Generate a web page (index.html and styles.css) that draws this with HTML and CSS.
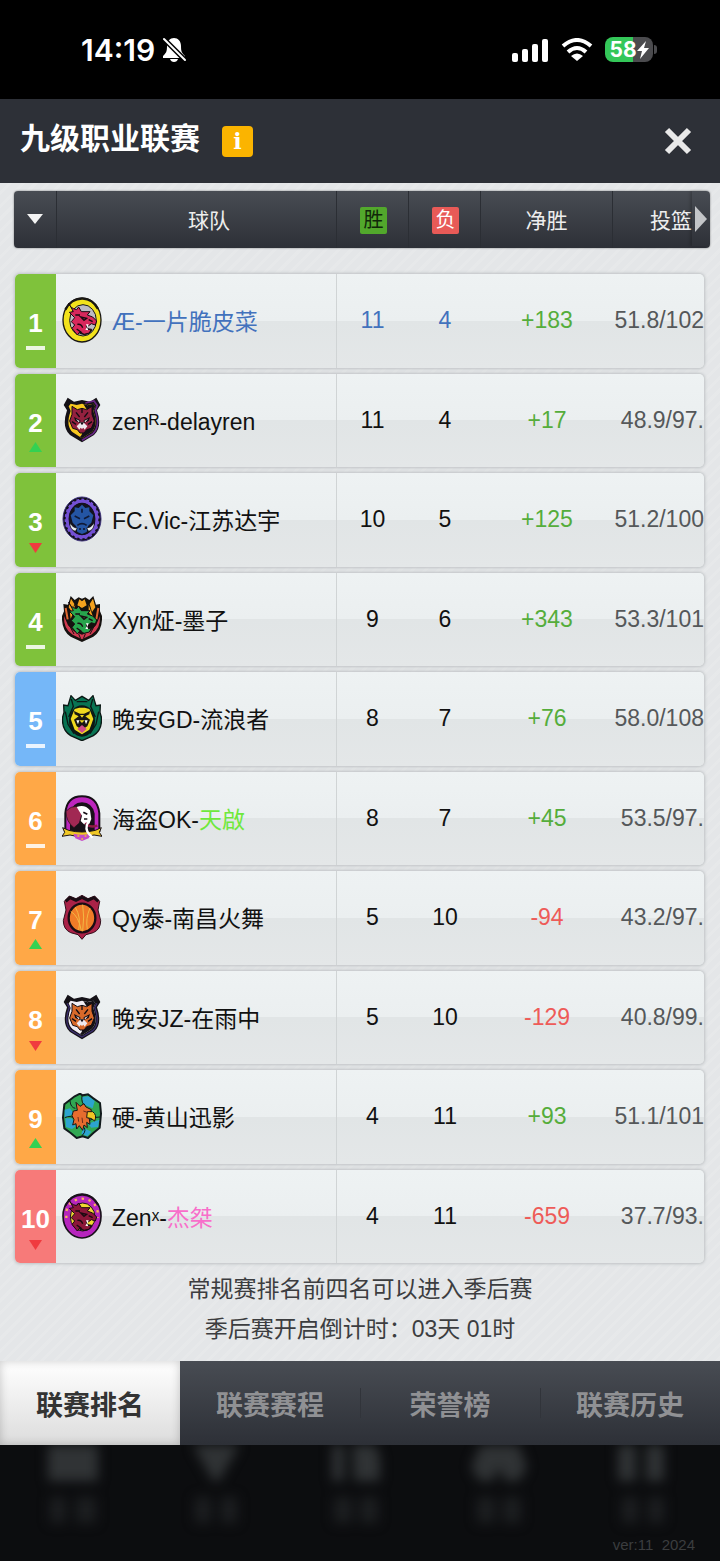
FILE: index.html
```html
<!DOCTYPE html>
<html lang="zh-CN">
<head>
  <meta charset="UTF-8" />
  <meta name="viewport" content="width=device-width, initial-scale=1.0"/>
  <title>九级职业联赛</title>
  <link rel="stylesheet" href="styles.css">
</head>
<body>

  <!-- Shared crest parts -->
  <svg class="defs" width="0" height="0" aria-hidden="true">
    <symbol id="dragon" viewBox="0 0 120 138">
      <path d="M20 18 Q24 34 44 38 L50 30 L58 44 L84 44 L76 54 L92 60 L104 72 L100 84 L88 80 L80 86 L72 86 L78 98 L88 96 L82 108 L66 112 L54 104 L46 114 L30 94 L38 84 L28 74 L38 62 L22 46 L34 44 Z" fill="currentColor" stroke="#190a10" stroke-width="3" stroke-linejoin="round"/>
      <path d="M56 60 L74 64 L66 70 Z M46 82 Q58 80 62 92 M80 68 L92 74 M40 54 L54 54 M44 96 L58 106" fill="none" stroke="#190a10" stroke-width="4"/>
      <path d="M72 82 L76 92 L80 82 Z M70 98 L75 91 L79 100 Z" fill="#fff"/>
    </symbol>
    <symbol id="cat" viewBox="0 0 120 138">
      <path d="M30 28 L46 38 L60 34 L74 38 L90 28 L90 52 L97 72 L88 94 L74 98 L66 108 L54 108 L46 98 L32 94 L23 72 L30 52 Z" fill="currentColor" stroke="#100b12" stroke-width="3"/>
      <path d="M42 46 L53 60 M78 46 L67 60 M30 74 L42 82 M90 74 L78 82 M60 34 V48" stroke="#100b12" stroke-width="4"/>
      <path d="M36 60 L55 70 L55 78 L40 72 Z M84 60 L65 70 L65 78 L80 72 Z" fill="#100b12"/>
      <path d="M42 66 L53 72 L50 76 Z M78 66 L67 72 L70 76 Z M44 88 L56 76 L64 76 L76 88 L68 98 L64 92 L60 96 L56 92 L52 98 Z" fill="#eee8ee"/>
      <path d="M54 76 H66 L60 85 Z" fill="#100b12"/>
    </symbol>
    <symbol id="shield" viewBox="0 0 120 138">
      <path d="M17 2 L36 14 L60 9 L84 14 L103 2 L115 24 L105 40 Q122 90 96 114 L60 136 L24 114 Q-2 90 15 40 L5 24 Z" fill="#141117"/>
      <path d="M26 20 L44 24 L60 20 L76 24 L94 20 L100 28 L94 42 Q110 86 88 106 L60 124 L32 106 Q10 86 26 42 L20 28 Z" fill="currentColor"/>
      <path d="M64 21 L76 25 L94 20 L100 28 L94 42 Q110 86 88 106 L60 124 L54 120 Q66 108 58 94 L88 60 Z" fill="#141117"/>
    </symbol>
  </svg>

  <!-- Status bar -->
  <div class="status-bar">
    <div class="status-left">
      <span class="time">14:19</span>
      <svg width="25" height="26" viewBox="0 0 25 26">
        <path d="M12 1 C16 1 19 4 19 9 C19 15 20 16 23 19 V21 H1 V19 C4 16 5 15 5 9 C5 4 8 1 12 1 Z" fill="#fff"/>
        <path d="M8 22 H16 Q15 25 12 25 Q9 25 8 22 Z" fill="#fff"/>
        <path d="M0 0 L25 25" stroke="#000" stroke-width="5"/>
        <path d="M2 2 L23 23" stroke="#fff" stroke-width="2" stroke-linecap="round"/>
      </svg>
    </div>
    <div class="status-right">
      <svg width="37" height="24" viewBox="0 0 37 24" fill="#fff">
        <rect x="0" y="15" width="6" height="9" rx="2"/>
        <rect x="10" y="11" width="6" height="13" rx="2"/>
        <rect x="20" y="6" width="6" height="18" rx="2"/>
        <rect x="30" y="1" width="6" height="23" rx="2"/>
      </svg>
      <svg width="32" height="24" viewBox="0 0 32 24">
        <path d="M2 8 Q16 -4 30 8" fill="none" stroke="#fff" stroke-width="4"/>
        <path d="M7 14 Q16 6 25 14" fill="none" stroke="#fff" stroke-width="4"/>
        <path d="M16 23 L10 18 Q16 13 22 18 Z" fill="#fff"/>
      </svg>
      <div class="battery">
        <span>58</span>
        <svg width="12" height="18" viewBox="0 0 12 18"><path d="M9 0 L0 10 H5 L3 18 L12 7 H7 Z" fill="#fff"/></svg>
      </div>
    </div>
  </div>

  <!-- Header -->
  <header>
    <h1>九级职业联赛</h1>
    <button class="info-btn" aria-label="说明">i</button>
    <button class="close-btn" aria-label="关闭">
      <svg width="28" height="28" viewBox="0 0 28 28"><path d="M3 3 L25 25 M25 3 L3 25" stroke="#e9e9e9" stroke-width="6"/></svg>
    </button>
  </header>

  <main>
    <table class="ranking">
      <thead>
        <tr>
          <th><button class="sort-btn" aria-label="排序"><svg width="16" height="10" viewBox="0 0 16 10"><path d="M0 0 H16 L8 10 Z" fill="#f4f4f4"/></svg></button></th>
          <th class="team-head">球队</th>
          <th><span class="badge win">胜</span></th>
          <th><span class="badge loss">负</span></th>
          <th>净胜</th>
          <th class="scroll-head"><span>投篮</span><button class="next-btn" aria-label="更多"><svg width="12" height="26" viewBox="0 0 12 26"><path d="M0 0 L12 13 L0 26 Z" fill="#c3c5c8"/></svg></button></th>
        </tr>
      </thead>
      <tbody>
        <tr class="mine">
          <td class="rank green">1<i class="same"></i></td>
          <td class="team">
            <svg class="crest" viewBox="0 0 120 138">
              <ellipse cx="60" cy="69" rx="57" ry="66" fill="#f2e21c" stroke="#191714" stroke-width="4"/>
              <path d="M10 38 Q28 4 62 5 Q92 6 108 36" fill="none" stroke="#191714" stroke-width="7"/>
              <ellipse cx="63" cy="70" rx="40" ry="47" fill="#bdbcc4" stroke="#191714" stroke-width="3"/>
              <path d="M36 80 Q42 110 64 114 Q84 114 92 98 L70 90 Z" fill="#191714"/>
              <use href="#dragon" color="#d8285c"/>
            </svg>
            <span>Æ-一片脆皮菜</span>
          </td>
          <td>11</td><td>4</td><td class="plus">+183</td><td class="shots">51.8/102</td>
        </tr>
        <tr>
          <td class="rank green">2<i class="up"></i></td>
          <td class="team">
            <svg class="crest" viewBox="0 0 120 138">
              <use href="#shield" color="#f7c71f"/>
              <path d="M70 18 L96 12 L106 26 L100 40 Q116 88 93 110 L60 130" fill="none" stroke="#6a2785" stroke-width="5"/>
              <use href="#cat" color="#94213f"/>
            </svg>
            <span>zenᴿ-delayren</span>
          </td>
          <td>11</td><td>4</td><td class="plus">+17</td><td class="shots">48.9/97.</td>
        </tr>
        <tr>
          <td class="rank green">3<i class="down"></i></td>
          <td class="team">
            <svg class="crest" viewBox="0 0 120 138">
              <ellipse cx="60" cy="69" rx="57" ry="66" fill="#111019" stroke="#3c2f7a" stroke-width="3"/>
              <ellipse cx="60" cy="69" rx="46" ry="55" fill="none" stroke="#7350d4" stroke-width="13"/>
              <ellipse cx="60" cy="69" rx="52" ry="61" fill="none" stroke="#111019" stroke-width="6" stroke-dasharray="7 9"/>
              <ellipse cx="60" cy="69" rx="40" ry="48" fill="#13131f"/>
              <path d="M60 26 L70 36 L82 34 L82 46 L94 58 L88 80 L78 90 L74 108 L60 114 L46 108 L42 90 L32 80 L26 58 L38 46 L38 34 L50 36 Z" fill="#2455a4"/>
              <path d="M38 60 L54 68 M82 60 L66 68 M46 88 Q60 78 74 88 M54 102 V96 M66 102 V96 M60 38 V50" fill="none" stroke="#101a37" stroke-width="5"/>
              <path d="M24 80 Q22 100 40 106 L46 96 Q32 96 24 80 Z M96 80 Q98 100 80 106 L74 96 Q88 96 96 80 Z" fill="#e9ecf2" stroke="#111019" stroke-width="2"/>
            </svg>
            <span>FC.Vic-江苏达宇</span>
          </td>
          <td>10</td><td>5</td><td class="plus">+125</td><td class="shots">51.2/100</td>
        </tr>
        <tr>
          <td class="rank green">4<i class="same"></i></td>
          <td class="team">
            <svg class="crest" viewBox="0 0 120 138">
              <path d="M26 0 L38 12 L50 4 L60 8 L70 4 L82 12 L94 0 L102 26 L114 24 L114 46 L120 60 Q122 104 94 122 L60 138 L26 122 Q-2 104 0 60 L6 46 L4 24 L18 26 Z" fill="#15110f"/>
              <path d="M27 8 L37 24 L30 48 L20 34 Z M93 8 L83 24 L90 48 L100 34 Z M52 10 L60 16 L68 10 L74 28 L60 36 L46 28 Z M80 26 L90 54 L98 74 L80 48 Z M40 26 L34 50 L26 68 L24 52 Z" fill="#f4a11e"/>
              <path d="M6 60 Q4 100 32 116 L60 130 L88 116 Q116 100 114 60 L102 88 L84 106 L60 116 L36 106 L18 88 Z" fill="#d03a50"/>
              <path d="M20 84 L36 114 M100 84 L84 114 M50 114 L56 128 M70 114 L64 128" fill="none" stroke="#15110f" stroke-width="3"/>
              <path d="M11 36 L17 70 M109 36 L103 70" stroke="#e36a32" stroke-width="6"/>
              <use href="#dragon" color="#27a44c"/>
            </svg>
            <span>Xyn炡-墨子</span>
          </td>
          <td>9</td><td>6</td><td class="plus">+343</td><td class="shots">53.3/101</td>
        </tr>
        <tr>
          <td class="rank blue">5<i class="same"></i></td>
          <td class="team">
            <svg class="crest" viewBox="0 0 120 138">
              <path d="M27 2 L40 16 L60 4 L80 16 L93 2 L102 32 L115 30 L114 52 L118 66 Q122 104 94 122 L60 137 L26 122 Q-2 104 2 66 L6 52 L5 30 L18 32 Z" fill="#087453" stroke="#0b1714" stroke-width="4"/>
              <path d="M28 12 L34 34 L20 66 M92 12 L86 34 L100 66 M10 50 L18 88 L36 116 M110 50 L102 88 L84 116 M44 20 H76" fill="none" stroke="#0b1714" stroke-width="4"/>
              <ellipse cx="60" cy="78" rx="39" ry="47" fill="#0b1714"/>
              <path d="M38 42 L52 38 H68 L82 42 L94 72 L82 104 L60 118 L38 104 L26 72 Z" fill="#f0d91f"/>
              <path d="M36 48 L54 56 H66 L84 48 L82 58 L70 64 L84 74 L76 94 L60 104 L44 94 L36 74 L50 64 L38 58 Z" fill="#191713"/>
              <path d="M54 60 H66 L60 68 Z M52 76 H68 L60 84 Z" fill="#f0d91f"/>
              <path d="M46 102 L60 90 L74 102 L60 114 Z" fill="#d14c8b"/>
              <path d="M43 76 L48 88 L52 76 Z M77 76 L72 88 L68 76 Z" fill="#fff"/>
            </svg>
            <span>晚安GD-流浪者</span>
          </td>
          <td>8</td><td>7</td><td class="plus">+76</td><td class="shots">58.0/108</td>
        </tr>
        <tr>
          <td class="rank orange">6<i class="same"></i></td>
          <td class="team">
            <svg class="crest" viewBox="0 0 120 138">
              <path d="M10 108 V55 Q14 4 60 4 Q106 4 112 55 V108 Z" fill="#bd25bd" stroke="#171017" stroke-width="6"/>
              <path d="M24 108 V56 Q30 23 60 22 Q90 22 98 56 V108 Z" fill="#171017"/>
              <path d="M12 50 Q26 30 52 36 L60 56 L52 84 L36 98 Q12 80 12 50 Z" fill="#a12853" stroke="#171017" stroke-width="2"/>
              <path d="M44 36 Q68 26 84 46 L88 72 L82 86 L66 88 L56 78 L60 62 Z" fill="#fff"/>
              <path d="M64 52 L76 58 M66 72 L76 72" stroke="#171017" stroke-width="5"/>
              <path d="M70 84 Q84 100 106 92" fill="none" stroke="#8f1c45" stroke-width="7"/>
              <path d="M2 98 L20 106 Q60 116 100 106 L118 98 L112 112 L120 124 L96 120 Q60 130 24 120 L0 124 L8 112 Z" fill="#f0c826" stroke="#171017" stroke-width="3"/>
              <path d="M34 116 Q60 122 86 116 L80 130 L60 138 L40 130 Z" fill="#c64bc9"/>
              <path d="M46 123 H52 M58 132 H63 M68 123 H73" stroke="#f0c826" stroke-width="4"/>
              <path d="M80 78 Q66 102 82 118 L92 128" fill="none" stroke="#fff" stroke-width="7"/>
            </svg>
            <span>海盗OK-<b class="lime">天啟</b></span>
          </td>
          <td>8</td><td>7</td><td class="plus">+45</td><td class="shots">53.5/97.</td>
        </tr>
        <tr>
          <td class="rank orange">7<i class="up"></i></td>
          <td class="team">
            <svg class="crest" viewBox="0 0 120 138">
              <path d="M22 6 L42 14 L60 4 L78 14 L98 6 L113 22 L108 48 L116 80 Q116 106 94 116 L72 122 L60 136 L48 122 L26 116 Q4 106 4 80 L12 48 L7 22 Z" fill="#aa2247" stroke="#30101c" stroke-width="3"/>
              <path d="M11 22 L24 11 L42 19 L60 10 L78 19 L96 11 L109 22" fill="none" stroke="#190c13" stroke-width="9"/>
              <ellipse cx="60" cy="72" rx="40" ry="43" fill="#f07c28" stroke="#190c13" stroke-width="7"/>
              <path d="M40 40 Q58 70 50 108 M62 32 Q68 66 62 112 M84 42 Q70 74 76 106 M26 52 Q50 66 58 110" fill="none" stroke="#f3b944" stroke-width="3"/>
            </svg>
            <span>Qy泰-南昌火舞</span>
          </td>
          <td>5</td><td>10</td><td class="minus">-94</td><td class="shots">43.2/97.</td>
        </tr>
        <tr>
          <td class="rank orange">8<i class="down"></i></td>
          <td class="team">
            <svg class="crest" viewBox="0 0 120 138">
              <use href="#shield" color="#f0edf5"/>
              <path d="M15 28 L22 40 Q4 88 28 110 L60 129 L92 110 Q116 88 98 40 L105 28" fill="none" stroke="#3a2e6c" stroke-width="4"/>
              <use href="#cat" color="#d8692a"/>
            </svg>
            <span>晚安JZ-在雨中</span>
          </td>
          <td>5</td><td>10</td><td class="minus">-129</td><td class="shots">40.8/99.</td>
        </tr>
        <tr>
          <td class="rank orange">9<i class="up"></i></td>
          <td class="team">
            <svg class="crest" viewBox="0 0 120 138">
              <path d="M38 10 L54 2 L62 7 L78 4 L94 16 L114 30 L117 62 L113 104 L94 120 L78 135 L62 130 L44 135 L26 120 L7 106 L3 74 L7 34 Z" fill="#31a853" stroke="#111a1c" stroke-width="6"/>
              <path d="M60 12 L80 10 L98 24 L92 46 L64 34 Z M112 80 L108 102 L88 104 L78 92 Z M88 116 L76 130 L58 122 L64 104 Z M30 76 L10 76 L12 102 L30 108 L42 100 Z M8 50 L24 46 L36 62 L8 74 Z" fill="#2ca4cf"/>
              <path d="M60 8 Q56 30 72 42 M114 72 Q96 70 84 82 M60 128 Q78 110 60 98 M8 74 Q26 66 36 76 M24 24 Q26 44 40 46" fill="none" stroke="#111a1c" stroke-width="3"/>
              <path d="M42 28 L54 40 L66 32 L72 42 L88 50 L86 62 L76 66 L82 78 L84 94 L74 88 L76 104 L66 96 L62 112 L52 98 L44 108 L42 92 L32 96 L36 80 L30 68 L34 54 L46 52 Z" fill="#e66c2e" stroke="#191516" stroke-width="3"/>
              <path d="M76 56 L92 56 Q106 66 98 84 Q90 74 74 74 Z" fill="#f2c524" stroke="#191516" stroke-width="3"/>
              <path d="M64 54 L76 58 M48 72 L50 86 M60 74 L62 90" stroke="#6e2b1c" stroke-width="3"/>
            </svg>
            <span>硬-黄山迅影</span>
          </td>
          <td>4</td><td>11</td><td class="plus">+93</td><td class="shots">51.1/101</td>
        </tr>
        <tr>
          <td class="rank red">10<i class="down"></i></td>
          <td class="team">
            <svg class="crest" viewBox="0 0 120 138">
              <ellipse cx="60" cy="69" rx="57" ry="66" fill="#b625bd" stroke="#1a111b" stroke-width="5"/>
              <path d="M10 38 Q28 4 62 5 Q92 6 108 36" fill="none" stroke="#1a111b" stroke-width="6"/>
              <ellipse cx="62" cy="72" rx="37" ry="42" fill="#f0d832" stroke="#1a111b" stroke-width="3"/>
              <path d="M13 75 V56 Q20 20 60 17 Q100 20 107 56 V75" fill="none" stroke="#f9b25c" stroke-width="7" stroke-dasharray="7 14"/>
              <path d="M36 80 Q42 110 64 114 Q84 114 92 98 L70 90 Z" fill="#1a111b"/>
              <use href="#dragon" color="#8c1739"/>
            </svg>
            <span>Zenˣ-<b class="pink">杰桀</b></span>
          </td>
          <td>4</td><td>11</td><td class="minus">-659</td><td class="shots">37.7/93.</td>
        </tr>
      </tbody>
    </table>

    <div class="notes">
      <p>常规赛排名前四名可以进入季后赛</p>
      <p>季后赛开启倒计时：03天 01时</p>
    </div>
  </main>

  <!-- Tabs -->
  <nav class="tabs">
    <button class="active">联赛排名</button>
    <button>联赛赛程</button>
    <button>荣誉榜</button>
    <button>联赛历史</button>
  </nav>

  <!-- Dimmed menu under the dialog -->
  <footer>
    <div class="dim-menu" aria-hidden="true">
      <svg viewBox="0 0 80 86"><path d="M18 -10 H68 V36 H18 Z"/><path class="label" d="M20 52 H36 V78 H20 Z M46 52 H66 V78 H46 Z"/></svg>
      <svg viewBox="0 0 80 86"><path d="M14 -10 H72 L46 36 H40 Z"/><path class="label" d="M22 52 H38 V78 H22 Z M48 52 H64 V78 H48 Z"/></svg>
      <svg viewBox="0 0 80 86"><path d="M16 -10 H28 V36 H16 Z M36 -10 H56 L64 12 V36 H38 Z"/><path class="label" d="M18 52 H36 V78 H18 Z M44 52 H62 V78 H44 Z"/></svg>
      <svg viewBox="0 0 80 86"><path d="M26 -10 H56 L68 22 L60 36 H46 L40 22 L34 36 H20 L12 22 Z"/><path class="label" d="M18 52 H36 V78 H18 Z M44 52 H62 V78 H44 Z"/></svg>
      <svg viewBox="0 0 80 86"><path d="M16 -10 H34 V36 H16 Z M44 -10 H62 V36 H44 Z"/><path class="label" d="M20 52 H36 V78 H20 Z M46 52 H62 V78 H46 Z"/></svg>
    </div>
    <p class="version">ver:11&nbsp; 2024</p>
  </footer>

</body>
</html>
```
FILE: styles.css
```css
:root {
  --dark: #2d3037;
  --bar: linear-gradient(#484c53, #2d3037);
  --green: #7fc23b;
  --blue: #75b7f8;
  --orange: #ffa847;
  --red: #f77a79;
}

* {
  box-sizing: border-box;
}

body {
  margin: 0;
  font-family: "Liberation Sans", "Noto Sans CJK SC", sans-serif;
  background-color: #0c0d0f;
  color: #111;
}

button {
  border: none;
  padding: 0;
  background: none;
  font-family: inherit;
  cursor: pointer;
}

svg {
  display: block;
}

.defs {
  position: absolute;
}

/* Status bar */
.status-bar {
  display: flex;
  justify-content: space-between;
  align-items: center;
  height: 99px;
  padding: 0 67px 0 81px;
  background: #000;
  color: #fff;
  font-family: Inter, sans-serif;
}

.status-left {
  display: flex;
  align-items: center;
  gap: 7px;
}

.time {
  font-size: 30px;
  font-weight: 600;
}

.status-right {
  display: flex;
  align-items: center;
  gap: 12px;
}

.battery {
  position: relative;
  display: flex;
  align-items: center;
  justify-content: center;
  width: 48px;
  height: 25px;
  border-radius: 8px;
  background: linear-gradient(90deg, #34c759 58%, #4b4b4e 58%);
  font-size: 21px;
  font-weight: 700;
}

.battery::after {
  content: "";
  position: absolute;
  right: -4px;
  top: 8px;
  width: 3px;
  height: 9px;
  border-radius: 0 3px 3px 0;
  background: #4b4b4e;
}

/* Header */
header {
  display: flex;
  align-items: center;
  height: 84px;
  padding: 0 28px 0 20px;
  background: var(--dark);
  color: #fff;
}

h1 {
  margin: 0;
  font-size: 30px;
  line-height: 40px;
  padding-bottom: 4px;
  font-weight: bold;
}

.info-btn {
  width: 31px;
  height: 31px;
  margin-left: 22px;
  border-radius: 4px;
  background: #fbb400;
  color: #fff;
  font: bold 22px/30px "DejaVu Serif", serif;
}

.close-btn {
  margin-left: auto;
}

/* Ranking */
main {
  padding: 8px 10px 12px 14px;
  background: repeating-linear-gradient(135deg, transparent 0 6px, rgba(255,255,255,0.1) 6px 9px), #e4e6e8;
}

.ranking,
.ranking thead {
  display: block;
}

.ranking tr {
  display: grid;
  grid-template-columns: 42px 1fr 72px 72px 132px 98px;
}

.ranking thead tr {
  height: 57px;
  border-radius: 4px;
  background: var(--bar);
  box-shadow: 0 0 2px rgba(0,0,0,0.5);
}

.ranking th {
  display: flex;
  align-items: center;
  justify-content: center;
  padding: 0 0 2px;
  border-left: 1px solid #2b2e34;
  color: #eee;
  font-size: 21px;
  font-weight: normal;
}

.ranking th:first-child {
  border-left: none;
}

.ranking .team-head {
  padding-left: 25px;
}

.badge {
  width: 27px;
  height: 27px;
  margin: 4px 0 0 2px;
  border-radius: 2px;
  font-size: 20px;
  line-height: 27px;
  text-align: center;
}

.win {
  background: #52a82c;
  color: #10280a;
}

.loss {
  background: #e85a57;
  color: #fff;
}

.ranking .scroll-head {
  justify-content: flex-end;
}

.next-btn {
  display: flex;
  align-items: center;
  width: 18px;
  height: 100%;
  padding-left: 3px;
  border-radius: 0 4px 4px 0;
  box-shadow: -2px 0 3px rgba(0,0,0,0.2);
}

.ranking tbody {
  display: flex;
  flex-direction: column;
  gap: 6px;
  margin: 26px 6px 0 1px;
}

.ranking tbody tr {
  grid-template-columns: 41px 1fr 72px 74px 130px 92px;
  height: 93px;
  overflow: hidden;
  border-radius: 5px;
  background: linear-gradient(#eef2f3, #ebeff0 50%, #e1e5e6 50%, #e4e7e8);
  box-shadow: 0 0 3px 1px #bec2c4;
}

.ranking tbody tr:nth-child(odd) {
  height: 94px;
}

.ranking td {
  padding: 0;
  font-size: 23px;
  line-height: 92px;
  text-align: center;
}

.ranking td:nth-child(3) {
  border-left: 1px solid #d0d4d5;
}

.ranking .rank {
  display: flex;
  flex-direction: column;
  align-items: center;
  padding-top: 34px;
  color: #fff;
  font-size: 26px;
  font-weight: bold;
  line-height: 30px;
}

.rank.green { background: var(--green); }
.rank.blue { background: var(--blue); }
.rank.orange { background: var(--orange); }
.rank.red { background: var(--red); }

.same {
  width: 19px;
  height: 4px;
  margin-top: 8px;
  background: rgba(255,255,255,0.85);
}

.up,
.down {
  width: 13px;
  height: 10px;
  margin-top: 4px;
  background: #34d152;
  clip-path: polygon(50% 0, 100% 100%, 0 100%);
}

.down {
  margin-top: 6px;
  background: #f03b3f;
  clip-path: polygon(0 0, 100% 0, 50% 100%);
}

.ranking .team {
  display: flex;
  gap: 10px;
  padding-left: 6px;
  line-height: 96px;
  text-align: left;
  white-space: nowrap;
}

.crest {
  flex: none;
  width: 40px;
  height: 46px;
  margin-top: 23px;
}

.team b {
  font-weight: normal;
}

.lime { color: #6fe83c; }
.pink { color: #f86fca; }
.mine td { color: #4272bd; }

.ranking .plus { color: #55ad3b; }
.ranking .minus { color: #ee5b58; }

.ranking .shots {
  color: #55585a;
  text-align: right;
}

.notes {
  padding-right: 4px;
  margin-top: 6px;
  text-align: center;
}

.notes p {
  margin: 0;
  color: #3c3d40;
  font-size: 23px;
  line-height: 40px;
}

/* Tabs */
.tabs {
  display: flex;
  height: 84px;
  background: var(--bar);
}

.tabs button {
  flex: 1;
  color: #909194;
  font-size: 27px;
  font-weight: bold;
}

.tabs button + button + button {
  background: linear-gradient(#31343a, #31343a) left center / 1px 30px no-repeat;
}

.tabs .active {
  background: linear-gradient(#fff, #dcdcdc);
  box-shadow: inset 0 0 10px rgba(0,0,0,0.2);
  color: #333;
}

/* Footer */
footer {
  height: 116px;
  overflow: hidden;
}

.dim-menu {
  display: flex;
  justify-content: space-between;
  padding: 0 38px 0 30px;
}

.dim-menu svg {
  width: 80px;
  height: 86px;
  fill: #303335;
  filter: blur(6px);
}

.dim-menu .label {
  fill: #1c1e20;
}

.version {
  margin: 4px 25px 0;
  color: #3b3d3f;
  font-size: 15px;
  line-height: 20px;
  text-align: right;
}
```
